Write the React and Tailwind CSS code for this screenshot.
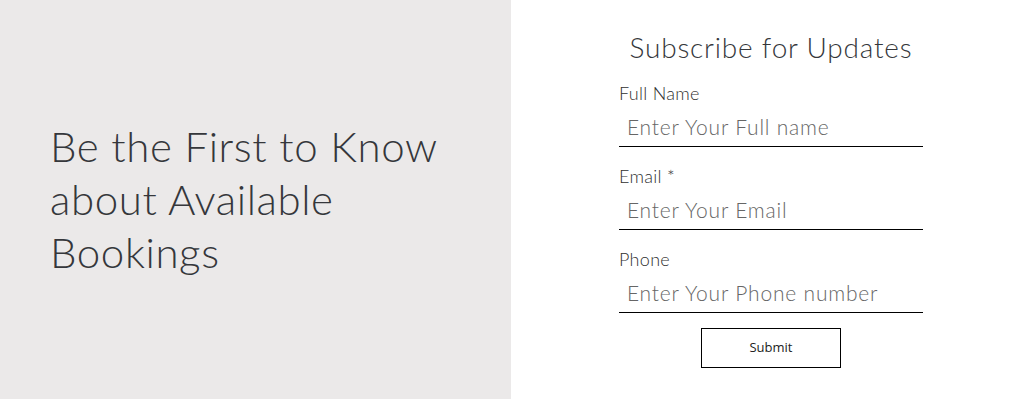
import React from 'react';

const fields = [
    { label: 'Full Name', placeholder: 'Enter Your Full name', type: 'text' },
    { label: 'Email *', placeholder: 'Enter Your Email', type: 'email' },
    { label: 'Phone', placeholder: 'Enter Your Phone number', type: 'tel' },
];

const App = () => {
    return (
        <div className="flex h-[399px] w-full bg-white font-['Lato',sans-serif]">
            <div className="w-[511px] shrink-0 bg-[#ebe9e9] flex items-center pl-[50px]">
                <h2 className="text-[42px] leading-[53px] font-light text-[#35373b] tracking-[0.6px]">
                    Be the First to Know
                    <br />
                    about Available
                    <br />
                    Bookings
                </h2>
            </div>

            <div className="flex-1 flex justify-center pl-[2px]">
                <form className="w-[304px] pt-[27px] flex flex-col" onSubmit={(e) => e.preventDefault()}>
                    <h3 className="text-[28px] leading-[40px] font-light text-center text-[#35373b] tracking-[0.8px]">
                        Subscribe for Updates
                    </h3>

                    <div className="flex flex-col mt-[14px] gap-[17px]">
                        {fields.map((f) => (
                            <div key={f.label} className="flex flex-col">
                                <label className="text-[18px] leading-[24px] font-light text-[#2f2f2f] tracking-[0.3px]">
                                    {f.label}
                                </label>
                                <input
                                    type={f.type}
                                    placeholder={f.placeholder}
                                    className="mt-[4px] h-[38px] pl-[8px] pr-[8px] pb-[3px] text-[21px] font-light tracking-[0.8px] text-[#333] placeholder:text-[#666] bg-transparent border-b border-black outline-none"
                                />
                            </div>
                        ))}
                    </div>

                    <div className="flex justify-center mt-[15px]">
                        <button
                            type="submit"
                            className="w-[140px] h-[40px] border border-black bg-white text-[13px] text-[#222] font-['Open_Sans',sans-serif]"
                        >
                            Submit
                        </button>
                    </div>
                </form>
            </div>
        </div>
    );
};

export default App;
